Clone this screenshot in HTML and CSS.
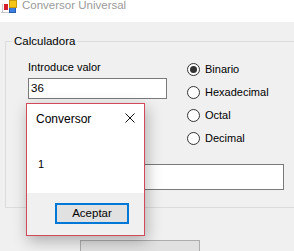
FILE: index.html
```html
<!DOCTYPE html>
<html>
<head>
<meta charset="utf-8">
<link rel="stylesheet" href="styles.css">
</head>
<body>
<div class="window">
  <div class="titlebar">
    <svg class="app-icon" width="16" height="13" viewBox="0 0 16 13">
      <path d="M1.5 4v9M0 12.5h8" stroke="#c8c8c8" stroke-width="1"/>
      <rect x="3" y="4" width="4" height="6" fill="#d3202a"/>
      <rect x="8.5" y="7.5" width="6" height="5" fill="#3d7fe0" stroke="#2a5fb0"/>
      <rect x="8.5" y="0.5" width="7" height="7" fill="#f5c518" stroke="#c99a0a"/>
    </svg>
    <span class="title">Conversor Universal</span>
  </div>
  <div class="group">
    <div class="group-title">Calculadora</div>
    <div class="group-row">
      <div class="input-col">
        <div class="label">Introduce valor</div>
        <div class="textbox small">36</div>
      </div>
      <div class="radio-col">
        <div class="radio"><span class="dot checked"></span><span>Binario</span></div>
        <div class="radio"><span class="dot"></span><span>Hexadecimal</span></div>
        <div class="radio"><span class="dot"></span><span>Octal</span></div>
        <div class="radio"><span class="dot"></span><span>Decimal</span></div>
      </div>
    </div>
    <div class="textbox wide"></div>
  </div>
  <div class="main-btn"></div>

  <div class="dialog">
    <div class="dialog-body">
      <div class="dialog-head">
        <span>Conversor</span>
        <svg class="close" width="10" height="10" viewBox="0 0 10 10">
          <path d="M0.5 0.5L9.5 9.5M9.5 0.5L0.5 9.5" stroke="#111" stroke-width="1"/>
        </svg>
      </div>
      <div class="dialog-msg">1</div>
    </div>
    <div class="dialog-foot">
      <div class="ok-btn">Aceptar</div>
    </div>
  </div>
</div>
</body>
</html>
```
FILE: styles.css
```css
html, body {
  margin: 0;
  padding: 0;
}
body {
  width: 294px;
  height: 251px;
  overflow: hidden;
  background: #f0f0f0;
  font-family: "Liberation Sans", Arial, sans-serif;
  font-size: 11px;
  color: #000;
}
.window {
  position: relative;
  height: 251px;
  overflow: hidden;
}
.titlebar {
  height: 22px;
  background: #fff;
  display: flex;
  align-items: flex-start;
}
.app-icon {
  margin-left: 1px;
  margin-top: 0;
}
.title {
  margin-left: 5px;
  margin-top: -2px;
  font-size: 11.5px;
  line-height: 14px;
  color: #9a9a9a;
}
.group {
  margin: 19px 0 0 5px;
  border: 1px solid #dcdcdc;
  border-right: none;
  padding: 0 0 17px 22px;
}
.group-title {
  width: fit-content;
  margin: -8px 0 0 -16px;
  padding: 0 2px;
  background: #f0f0f0;
  line-height: 15px;
  font-size: 11.5px;
}
.group-row {
  display: flex;
  margin-top: 9px;
  gap: 20px;
}
.input-col {
  width: 139px;
}
.label {
  margin-top: 2px;
  line-height: 15px;
}
.textbox {
  box-sizing: border-box;
  background: #fff;
  border: 1px solid #7a7a7a;
}
.textbox.small {
  margin-top: 3px;
  height: 21px;
  padding: 2px 0 0 2px;
  font-size: 11.5px;
  line-height: 15px;
}
.textbox.wide {
  margin-top: 14px;
  width: 256px;
  height: 26px;
}
.radio-col {
  display: flex;
  flex-direction: column;
}
.radio {
  height: 23px;
  display: flex;
  align-items: center;
  gap: 5px;
  line-height: 15px;
}
.dot {
  box-sizing: border-box;
  width: 13px;
  height: 13px;
  border: 1px solid #333;
  border-radius: 50%;
  background: #fff;
  display: flex;
  align-items: center;
  justify-content: center;
}
.dot.checked::after {
  content: "";
  width: 7px;
  height: 7px;
  border-radius: 50%;
  background: #333;
}
.main-btn {
  margin: 32px 0 0 80px;
  width: 120px;
  height: 23px;
  box-sizing: border-box;
  background: #e1e1e1;
  border: 1px solid #adadad;
}
.dialog {
  position: absolute;
  left: 26px;
  top: 103px;
  width: 119px;
  height: 133px;
  box-sizing: border-box;
  border: 1px solid #d04a5c;
  background: #f0f0f0;
  box-shadow: 2px 5px 14px rgba(0, 0, 0, 0.28);
  display: flex;
  flex-direction: column;
}
.dialog-body {
  height: 89px;
  background: #fff;
}
.dialog-head {
  height: 30px;
  display: flex;
  align-items: center;
  justify-content: space-between;
  padding: 0 9px 0 9px;
  font-size: 12px;
}
.close {
  margin-top: -2px;
}
.dialog-msg {
  margin: 23px 0 0 11px;
  line-height: 15px;
  font-size: 11px;
}
.dialog-foot {
  padding: 10px 0 0 28px;
}
.ok-btn {
  box-sizing: border-box;
  width: 74px;
  height: 21px;
  border: 2px solid #0078d7;
  background: #e1e1e1;
  text-align: center;
  line-height: 17px;
  font-size: 11.5px;
}
```
